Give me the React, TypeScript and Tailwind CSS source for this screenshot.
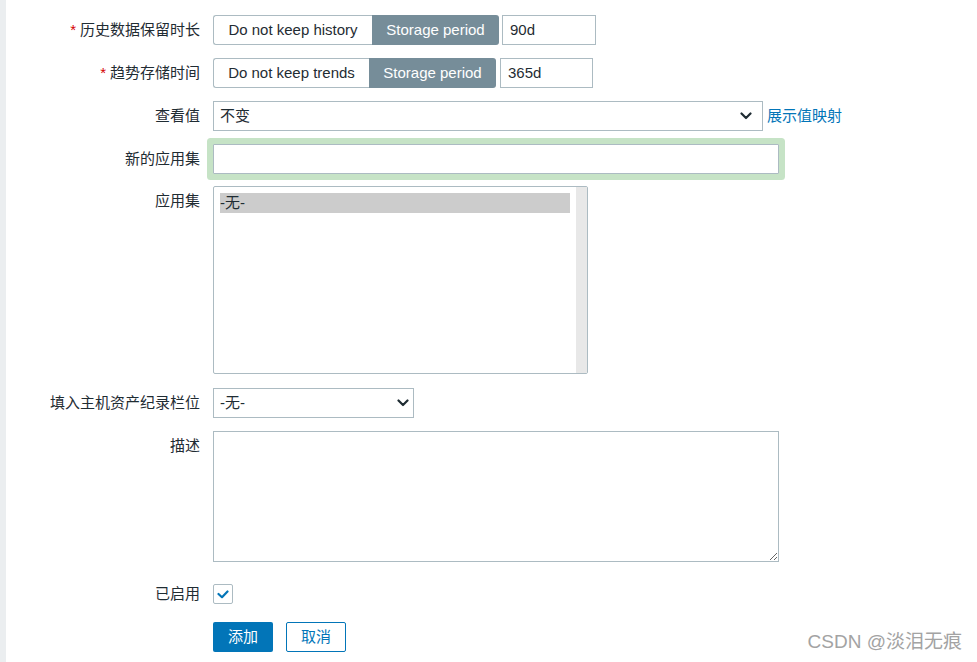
import React from 'react';

const font = { fontFamily: '"Liberation Sans", "Noto Sans CJK SC", sans-serif' };

const Chevron = () => (
  <svg width="12" height="8" viewBox="0 0 12 8" className="shrink-0">
    <polyline
      points="1.5,1.5 6,6 10.5,1.5"
      fill="none"
      stroke="#1f2c33"
      strokeWidth="2.2"
      strokeLinecap="round"
      strokeLinejoin="round"
    />
  </svg>
);

const Label: React.FC<{ children: React.ReactNode; required?: boolean }> = ({ children, required }) => (
  <div className="w-[194px] shrink-0 text-right leading-[30px] text-[15px] text-[#1f2c33]">
    {required && <span className="text-[#d40000] mr-[4px]">*</span>}
    {children}
  </div>
);

const Segmented: React.FC<{ off: string; offW: string; value: string; inputW: string; gap: string }> = ({
  off,
  offW,
  value,
  inputW,
  gap,
}) => (
  <div className="flex items-center h-[30px]">
    <div
      className={`${offW} h-full flex items-center justify-center border border-r-0 border-[#acbbc2] rounded-l-[3px] bg-white text-[15px] text-[#1f2c33]`}
    >
      {off}
    </div>
    <div className="w-[127px] h-full flex items-center justify-center bg-[#768d99] rounded-r-[3px] text-[15px] text-white">
      Storage period
    </div>
    <div
      className={`${gap} ${inputW} h-full flex items-center border border-[#acbbc2] pl-[7px] text-[15px] text-[#1f2c33]`}
    >
      {value}
    </div>
  </div>
);

export default function App() {
  return (
    <div className="relative flex min-h-[662px] bg-white" style={font}>
      <div className="w-[6px] shrink-0 bg-[#ebeef0]" />

      <div className="flex flex-col pt-[15px]">
        {/* history */}
        <div className="flex gap-[13px]">
          <Label required>历史数据保留时长</Label>
          <Segmented off="Do not keep history" offW="w-[159px]" value="90d" inputW="w-[94px]" gap="ml-[3px]" />
        </div>

        {/* trends */}
        <div className="flex gap-[13px] mt-[13px]">
          <Label required>趋势存储时间</Label>
          <Segmented off="Do not keep trends" offW="w-[156px]" value="365d" inputW="w-[93px]" gap="ml-[4px]" />
        </div>

        {/* value map */}
        <div className="flex gap-[13px] mt-[13px]">
          <Label>查看值</Label>
          <div className="flex items-center gap-[4px]">
            <div className="w-[550px] h-[30px] border border-[#acbbc2] flex items-center justify-between pl-[6px] pr-[10px] text-[15px] text-[#1f2c33]">
              <span>不变</span>
              <Chevron />
            </div>
            <a className="text-[15px] text-[#0275b8] leading-[30px]">展示值映射</a>
          </div>
        </div>

        {/* new application */}
        <div className="flex gap-[13px] mt-[13px]">
          <Label>新的应用集</Label>
          <div className="w-[566px] h-[30px] border border-[#acbbc2] rounded-[1px] ring-[6px] ring-[#c6e3c6] bg-white" />
        </div>

        {/* applications */}
        <div className="flex gap-[13px] mt-[12px]">
          <Label>应用集</Label>
          <div className="w-[375px] h-[188px] border border-[#acbbc2] rounded-[2px] flex">
            <div className="flex-1 pt-[6px] pl-[6px] pr-[6px]">
              <div className="h-[20px] bg-[#cccccc] leading-[20px] text-[15px] text-[#1f2c33]">-无-</div>
            </div>
            <div className="w-[11px] h-full bg-[#e8e8e8]" />
          </div>
        </div>

        {/* inventory */}
        <div className="flex gap-[13px] mt-[14px]">
          <Label>填入主机资产纪录栏位</Label>
          <div className="w-[201px] h-[30px] border border-[#acbbc2] flex items-center justify-between pl-[6px] pr-[4px] text-[15px] text-[#1f2c33]">
            <span>-无-</span>
            <Chevron />
          </div>
        </div>

        {/* description */}
        <div className="flex gap-[13px] mt-[13px]">
          <Label>描述</Label>
          <textarea className="w-[566px] h-[131px] border border-[#acbbc2] outline-none bg-white" />
        </div>

        {/* enabled */}
        <div className="flex gap-[13px] mt-[22px] items-center">
          <div className="w-[194px] shrink-0 text-right leading-[20px] text-[15px] text-[#1f2c33]">已启用</div>
          <div className="w-[20px] h-[20px] border border-[#acbbc2] rounded-[2px] flex items-center justify-center">
            <svg width="12" height="9" viewBox="0 0 12 9">
              <polyline
                points="1.5,4 5,7.2 10.5,1.5"
                fill="none"
                stroke="#0275b8"
                strokeWidth="2.2"
                strokeLinecap="round"
                strokeLinejoin="round"
              />
            </svg>
          </div>
        </div>

        {/* buttons */}
        <div className="flex gap-[13px] mt-[18px]">
          <div className="w-[194px] shrink-0" />
          <div className="flex gap-[13px]">
            <button className="w-[60px] h-[30px] rounded-[2px] bg-[#0275b8] text-white text-[15px]">添加</button>
            <button className="w-[60px] h-[30px] rounded-[2px] border border-[#0275b8] bg-white text-[#0275b8] text-[15px]">
              取消
            </button>
          </div>
        </div>
      </div>

      {/* watermark */}
      <div className="absolute right-[15px] top-[630px] text-[19px] leading-[24px] text-[#a3a3a3]">
        CSDN @淡泪无痕
      </div>
    </div>
  );
}
